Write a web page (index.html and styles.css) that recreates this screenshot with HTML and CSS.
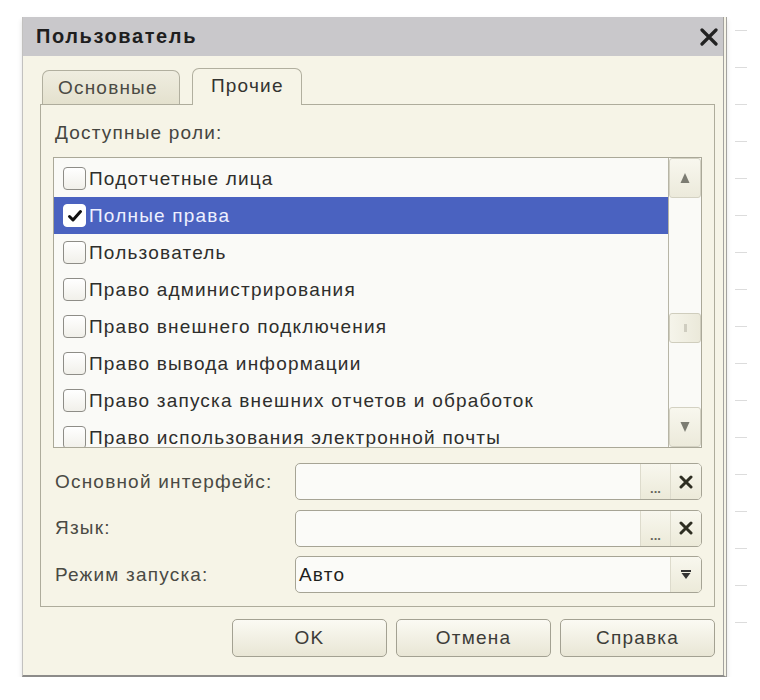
FILE: index.html
```html
<!DOCTYPE html>
<html lang="ru">
<head>
<meta charset="utf-8">
<title>Пользователь</title>
<link rel="stylesheet" href="styles.css">
</head>
<body>
<div class="page">
  <div class="window">
    <div class="titlebar">
      <span class="title">Пользователь</span>
      <svg class="close" width="18" height="18" viewBox="0 0 18 18"><path d="M2 2L16 16M16 2L2 16" stroke="#222" stroke-width="3.2" stroke-linecap="round"/></svg>
    </div>
    <div class="content">
      <div class="tabs">
        <div class="tab">Основные</div>
        <div class="tab active">Прочие</div>
      </div>
      <div class="panel">
        <div class="label">Доступные роли:</div>
        <div class="listbox">
          <div class="rows">
            <div class="row"><span class="cb"></span><span>Подотчетные лица</span></div>
            <div class="row selected"><span class="cb"><svg width="16" height="16" viewBox="0 0 16 16"><path d="M2.5 8.5L6 12L13.5 3.5" fill="none" stroke="#111" stroke-width="3" stroke-linejoin="round" stroke-linecap="round"/></svg></span><span>Полные права</span></div>
            <div class="row"><span class="cb"></span><span>Пользователь</span></div>
            <div class="row"><span class="cb"></span><span>Право администрирования</span></div>
            <div class="row"><span class="cb"></span><span>Право внешнего подключения</span></div>
            <div class="row"><span class="cb"></span><span>Право вывода информации</span></div>
            <div class="row"><span class="cb"></span><span>Право запуска внешних отчетов и обработок</span></div>
            <div class="row"><span class="cb"></span><span>Право использования электронной почты</span></div>
          </div>
          <div class="scrollbar">
            <div class="sbtn"><svg width="10" height="12" viewBox="0 0 10 12"><path d="M5 1L9.5 11H0.5Z" fill="#7c7c72"/></svg></div>
            <div class="track"><div class="thumb"><span class="grip"></span></div></div>
            <div class="sbtn"><svg width="10" height="12" viewBox="0 0 10 12"><path d="M0.5 1H9.5L5 11Z" fill="#7c7c72"/></svg></div>
          </div>
        </div>
        <div class="fields">
          <div class="flabel">Основной интерфейс:</div>
          <div class="input">
            <div class="value"></div>
            <div class="ibtn dots">...</div>
            <div class="ibtn clear"><svg width="14" height="14" viewBox="0 0 14 14"><path d="M2 2L12 12M12 2L2 12" stroke="#2e2e22" stroke-width="3" stroke-linecap="round"/></svg></div>
          </div>
          <div class="flabel">Язык:</div>
          <div class="input">
            <div class="value"></div>
            <div class="ibtn dots">...</div>
            <div class="ibtn clear"><svg width="14" height="14" viewBox="0 0 14 14"><path d="M2 2L12 12M12 2L2 12" stroke="#2e2e22" stroke-width="3" stroke-linecap="round"/></svg></div>
          </div>
          <div class="flabel">Режим запуска:</div>
          <div class="input">
            <div class="value">Авто</div>
            <div class="ibtn drop"><svg width="12" height="10" viewBox="0 0 12 10"><path d="M1 1H11" stroke="#333" stroke-width="2"/><path d="M1.5 3H10.5L6 9Z" fill="#333"/></svg></div>
          </div>
        </div>
      </div>
      <div class="buttons">
        <div class="btn">OK</div>
        <div class="btn">Отмена</div>
        <div class="btn">Справка</div>
      </div>
    </div>
  </div>
  <div class="ticks"></div>
</div>
</body>
</html>
```

FILE: styles.css
```css
html, body {
  margin: 0;
  background: #ffffff;
  font-family: "Liberation Sans", Arial, sans-serif;
}

.page {
  display: flex;
  align-items: flex-start;
  gap: 8px;
  padding: 17px 0 0 22px;
}

.window {
  width: 705px;
  height: 660px;
  box-sizing: border-box;
  display: flex;
  flex-direction: column;
  background: #f6f4e7;
  border-left: 1px solid #c2c1bf;
  border-right: 4px double #a3a29f;
  border-bottom: 2px solid #8c8b89;
  box-shadow: 0 3px 5px rgba(0, 0, 0, 0.12);
}

.titlebar {
  height: 39px;
  flex: none;
  display: flex;
  align-items: center;
  justify-content: space-between;
  padding: 0 5px 0 13px;
  background: #c9c8cb;
}

.title {
  font-weight: bold;
  font-size: 20px;
  letter-spacing: 1.6px;
  color: #1e1e1e;
}

.content {
  flex: 1;
  display: flex;
  flex-direction: column;
  padding: 12px 8px 0 17px;
  color: #3a3a36;
  font-size: 19px;
  letter-spacing: 1.2px;
}

.tabs {
  display: flex;
  align-items: flex-end;
  gap: 12px;
  height: 36px;
  padding-left: 2px;
  position: relative;
  z-index: 1;
}

.tab {
  box-sizing: border-box;
  height: 34px;
  width: 138px;
  padding-left: 15px;
  display: flex;
  align-items: center;
  border: 1px solid #b1af9f;
  border-bottom: none;
  border-radius: 7px 7px 0 0;
  background: linear-gradient(#efede0, #e4e1ce);
  color: #4a4a44;
}

.tab.active {
  width: 110px;
  height: 37px;
  margin-bottom: -1px;
  padding-left: 18px;
  padding-bottom: 3px;
  background: #f6f4e7;
  color: #333330;
}

.panel {
  box-sizing: border-box;
  border: 1px solid #aeac9c;
  padding: 17px 12px 13px 12px;
  display: flex;
  flex-direction: column;
}

.label {
  height: 22px;
  line-height: 22px;
  padding-left: 2px;
  color: #45453f;
}

.listbox {
  margin-top: 13px;
  height: 291px;
  box-sizing: border-box;
  border: 1px solid #aaa898;
  background: #fafaf7;
  display: flex;
}

.rows {
  flex: 1;
  overflow: hidden;
  padding-top: 2px;
}

.row {
  height: 37px;
  display: flex;
  align-items: center;
  padding-left: 9px;
  color: #2e2e2c;
  white-space: nowrap;
}

.row.selected {
  background: #4a62c0;
  color: #eef0ff;
}

.cb {
  box-sizing: border-box;
  width: 23px;
  height: 23px;
  margin-right: 3px;
  flex: none;
  border: 1px solid #8e8d87;
  border-radius: 4px;
  background: linear-gradient(#ffffff, #f1f0ea);
  display: flex;
  align-items: center;
  justify-content: center;
}

.selected .cb {
  background: #ffffff;
  border-color: #ffffff;
}

.scrollbar {
  width: 32px;
  flex: none;
  border-left: 1px solid #b7b5a6;
  display: flex;
  flex-direction: column;
  background: #fafaf7;
}

.sbtn {
  height: 40px;
  box-sizing: border-box;
  display: flex;
  align-items: center;
  justify-content: center;
  background: linear-gradient(#f8f7ee, #eceadb);
  border: 1px solid #d3d1c2;
  border-radius: 3px;
}

.track {
  flex: 1;
}

.thumb {
  margin-top: 115px;
  height: 30px;
  box-sizing: border-box;
  border: 1px solid #cfcdbd;
  border-radius: 3px;
  background: linear-gradient(90deg, #f5f4ea, #ebe9da);
  display: flex;
  align-items: center;
  justify-content: center;
}

.grip {
  width: 3px;
  height: 8px;
  background: #cfcdc0;
}

.fields {
  margin-top: 15px;
  display: grid;
  grid-template-columns: 242px 1fr;
  grid-auto-rows: 37px;
  row-gap: 9.5px;
  align-items: center;
}

.flabel {
  padding-left: 2px;
  color: #4a4a44;
}

.input {
  height: 37px;
  box-sizing: border-box;
  border: 1px solid #a6a495;
  border-radius: 5px;
  background: #fbfbf8;
  display: flex;
  overflow: hidden;
}

.value {
  flex: 1;
  display: flex;
  align-items: center;
  padding-left: 3px;
  color: #1f1f1d;
}

.ibtn {
  width: 30px;
  flex: none;
  display: flex;
  align-items: center;
  justify-content: center;
  background: linear-gradient(#f8f7ee, #ecead9);
  border-left: 1px solid #dddbcc;
}

.dots {
  align-items: flex-end;
  padding-bottom: 3px;
  box-sizing: border-box;
  font-size: 13px;
  font-weight: bold;
  letter-spacing: 0;
  color: #66665a;
}

.buttons {
  display: flex;
  justify-content: flex-end;
  gap: 9px;
  margin-top: 12px;
}

.btn {
  width: 155px;
  height: 38px;
  box-sizing: border-box;
  border: 1px solid #a3a192;
  border-radius: 5px;
  background: linear-gradient(#fbfaf3, #e9e6d5);
  display: flex;
  align-items: center;
  justify-content: center;
  color: #3c3c38;
}

.ticks {
  width: 12px;
  height: 620px;
  margin-top: 10px;
  background: repeating-linear-gradient(to bottom, transparent 0, transparent 3px, #dcdcdc 3px, #dcdcdc 4px, transparent 4px, transparent 37px);
}
```
